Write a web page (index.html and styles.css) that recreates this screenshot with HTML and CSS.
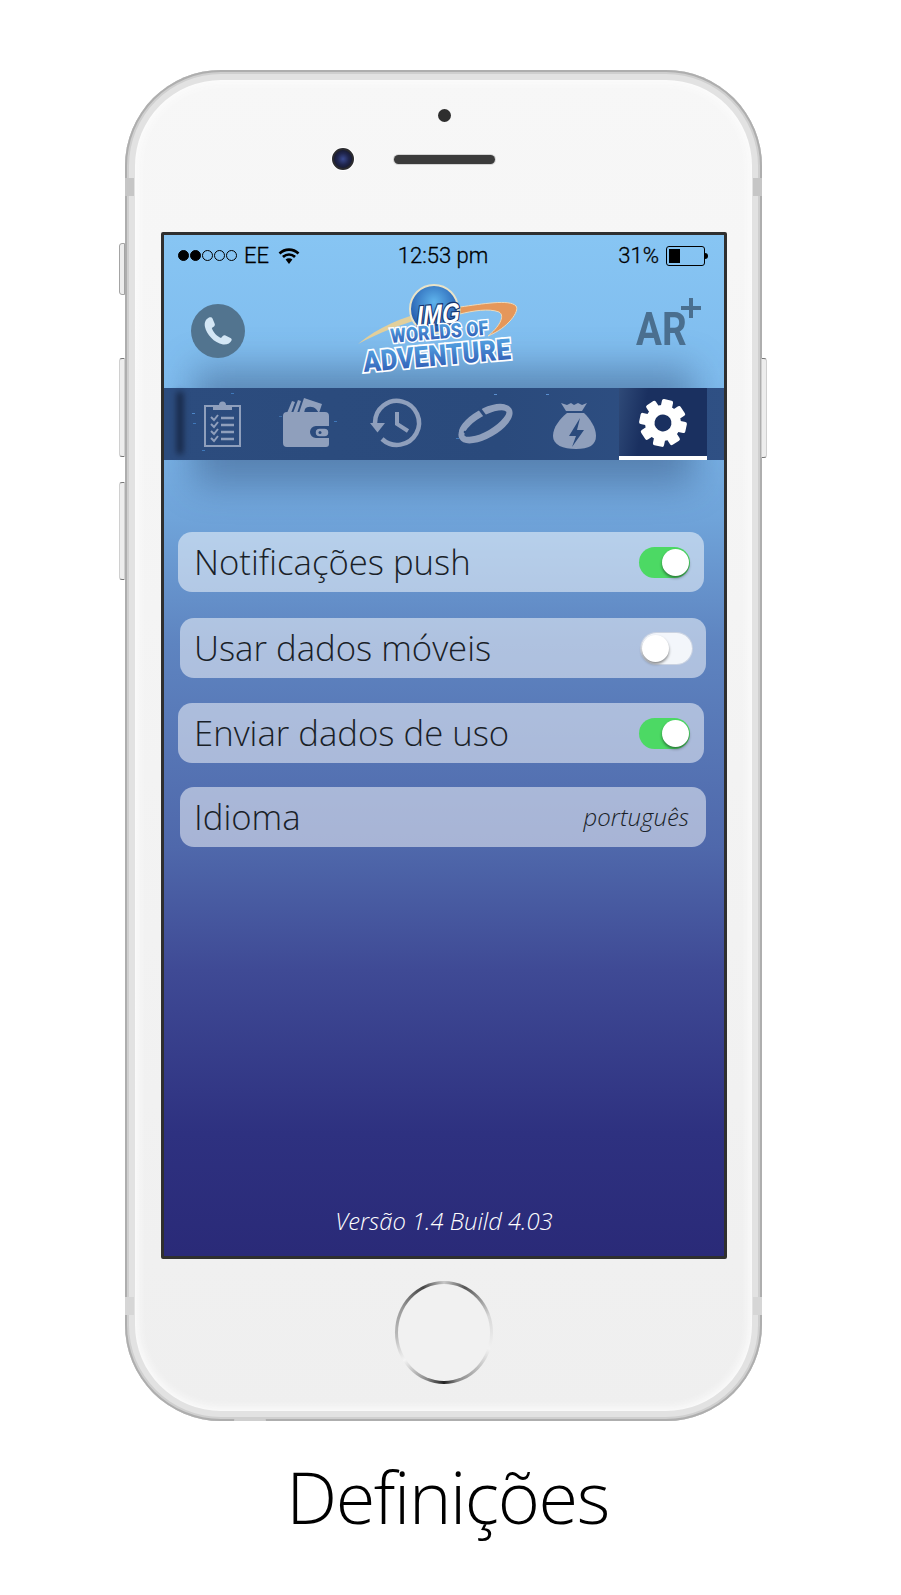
FILE: index.html
```html
<!DOCTYPE html>
<html>
<head>
  <title>Definições</title>
  <link rel="stylesheet" href="styles.css">
</head>
<body>
  <div class="phone">
    <div class="side-btn mute"></div>
    <div class="side-btn vol-up"></div>
    <div class="side-btn vol-down"></div>
    <div class="side-btn power"></div>
    <div class="band band-tl"></div>
    <div class="band band-tr"></div>
    <div class="band band-bl"></div>
    <div class="band band-br"></div>
    <div class="bump"></div>

    <div class="phone-top">
      <div class="sensor"></div>
      <div class="cam-row">
        <div class="camera"></div>
        <div class="earpiece"></div>
      </div>
    </div>

    <div class="screen">
      <div class="status-bar">
        <div class="status-left">
          <span class="dot on"></span><span class="dot on"></span><span class="dot"></span><span class="dot"></span><span class="dot"></span>
          <span class="carrier">EE</span>
          <svg class="wifi" width="22" height="18" viewBox="0 0 22 18">
            <path class="wifi-arc" d="M1.5 6.5a13.5 13.5 0 0 1 19 0"/>
            <path class="wifi-arc" d="M5 10a8.6 8.6 0 0 1 12 0"/>
            <path class="wifi-fill" d="M7.6 12.6a4.8 4.8 0 0 1 6.8 0L11 17z"/>
          </svg>
        </div>
        <div class="status-time">12:53 pm</div>
        <div class="status-right">
          <span class="percent">31%</span>
          <span class="battery"><span class="battery-level"></span></span>
          <span class="battery-nub"></span>
        </div>
      </div>

      <div class="app-header">
        <div class="call-btn">
          <svg width="34" height="34" viewBox="0 0 34 34">
            <path class="call-icon" d="M8 3.500C5 5 3 8 4 13c1.500 7 9 16 18 17.500 4 .5 7.500-1.500 8.500-4 .5-1 0-2-1-2.500l-5-2.500c-1-.5-2-.3-2.700.5L20 24c-4-1.500-8-6-9.200-10l2.200-1.500c.8-.7 1-1.500.8-2.500l-2.300-5.500C11 3.300 9.500 2.800 8 3.500z"/>
          </svg>
        </div>

        <svg class="logo" width="170" height="100" viewBox="0 0 170 100">
          <defs>
            <radialGradient id="globe" cx="50%" cy="35%" r="65%">
              <stop offset="0" stop-color="#5fb4ec"/>
              <stop offset="1" stop-color="#1c4fa6"/>
            </radialGradient>
            <linearGradient id="letters" x1="0" y1="0" x2="0" y2="1">
              <stop offset="0" stop-color="#5bb0ea"/>
              <stop offset="1" stop-color="#2a50ad"/>
            </linearGradient>
          </defs>
          <path class="swoosh-gold" d="M2 63C22 46 48 36 68 31l2 5C46 43 22 52 2 63z"/>
          <circle class="globe" cx="78" cy="28" r="24"/>
          <path class="swoosh-orange" d="M104 26c22-3 50-8 56-1 4 5-8 22-28 30 10-8 18-20 11-24-10-4-27-1-39 2z"/>
          <g transform="translate(60 45) rotate(-5) skewX(-12)">
            <text class="logo-img" textLength="43" lengthAdjust="spacingAndGlyphs">IMG</text>
          </g>
          <text class="logo-worlds" transform="translate(35 62) rotate(-5)" textLength="98" lengthAdjust="spacingAndGlyphs">WORLDS OF</text>
          <text class="logo-adventure" transform="translate(8 91) rotate(-5)" textLength="148" lengthAdjust="spacingAndGlyphs">ADVENTURE</text>
        </svg>

        <div class="ar-btn"><span class="ar-text">AR</span><span class="ar-plus"></span></div>
      </div>

      <div class="nav">
        <span class="nav-specks"></span>
        <div class="tab">
          <svg width="88" height="72" viewBox="0 0 88 72">
            <rect class="ic-line" x="25" y="18" width="35" height="40"/>
            <path class="ic-fill" d="M33 22v-5h6a3.500 3.500 0 0 1 7 0h6v5z"/>
            <path class="ic-check" d="M31 29l3 3 4-5M31 36l3 3 4-5M31 43l3 3 4-5M31 50l3 3 4-5"/>
            <path class="ic-row" d="M41 30h13M41 37h13M41 44h13M41 51h13"/>
          </svg>
        </div>
        <div class="tab">
          <svg width="88" height="72" viewBox="0 0 88 72">
            <path class="ic-fill" d="M19 25l5-12 3 1-4 11zM25 25l5-13 3 1-4 12zM31 25l5-15 18 6-3 9-3-4c-3-3-9-3-11 0l-1 4z"/>
            <path class="ic-fill" d="M19 24h38a4 4 0 0 1 4 4v10H48a6 6 0 0 0 0 12h13v6a3 3 0 0 1-3 3H19a4 4 0 0 1-4-4V28a4 4 0 0 1 4-4z"/>
            <rect class="ic-clasp" x="47" y="40" width="14" height="9" rx="4.500"/>
            <circle class="ic-dot" cx="52" cy="44.500" r="1.500"/>
          </svg>
        </div>
        <div class="tab">
          <svg width="88" height="72" viewBox="0 0 88 72">
            <path class="ic-clock" d="M19 35a22 22 0 1 1 7 16"/>
            <path class="ic-fill" d="M14 35h15l-7.500 9.500z"/>
            <path class="ic-hand" d="M41 24v12l11 7"/>
          </svg>
        </div>
        <div class="tab">
          <svg width="88" height="72" viewBox="0 0 88 72">
            <g transform="rotate(-30 41 35)">
              <ellipse class="ic-ring" cx="41" cy="36" rx="27" ry="11"/>
              <ellipse class="ic-ring-thin" cx="41" cy="33" rx="27" ry="11"/>
            </g>
            <path class="ic-gap" d="M35 20l6 8"/>
            <circle class="ic-dot" cx="21" cy="44" r="1.300"/>
            <circle class="ic-dot" cx="25" cy="41" r="1.300"/>
            <circle class="ic-dot" cx="29" cy="38" r="1.300"/>
          </svg>
        </div>
        <div class="tab">
          <svg width="88" height="72" viewBox="0 0 88 72">
            <path class="ic-fill" d="M29 15l6 2 4-2 3 2 4-2 4 2 5-2-5 8H34z"/>
            <path class="ic-fill" d="M35 25h17c6 6 12 14 12 23 0 9-7 13-20 13s-23-4-23-13c0-9 7-17 14-23z"/>
            <path class="ic-bolt" d="M48 30l-11 18h7l-4 11 12-17h-7z"/>
          </svg>
        </div>
        <div class="tab active">
          <svg width="88" height="72" viewBox="0 0 88 72">
            <g transform="rotate(12 44 37)">
              <circle class="ic-gear" cx="44" cy="37" r="19"/>
              <rect class="ic-gear" x="38" y="12" width="12" height="50" rx="2"/>
              <rect class="ic-gear" x="38" y="12" width="12" height="50" rx="2" transform="rotate(45 44 37)"/>
              <rect class="ic-gear" x="38" y="12" width="12" height="50" rx="2" transform="rotate(90 44 37)"/>
              <rect class="ic-gear" x="38" y="12" width="12" height="50" rx="2" transform="rotate(135 44 37)"/>
              <circle class="ic-hole" cx="44" cy="37" r="9"/>
            </g>
          </svg>
        </div>
      </div>

      <div class="settings">
        <div class="row">
          <span class="row-label">Notificações push</span>
          <span class="toggle on"><span class="knob"></span></span>
        </div>
        <div class="row inset">
          <span class="row-label">Usar dados móveis</span>
          <span class="toggle"><span class="knob"></span></span>
        </div>
        <div class="row">
          <span class="row-label">Enviar dados de uso</span>
          <span class="toggle on"><span class="knob"></span></span>
        </div>
        <div class="row inset">
          <span class="row-label">Idioma</span>
          <span class="row-value">português</span>
        </div>
      </div>

      <div class="version">Versão 1.4 Build 4.03</div>
    </div>

    <div class="home-btn"><div class="home-inner"></div></div>
  </div>

  <h1 class="caption">Definições</h1>
</body>
</html>
```

FILE: styles.css
```css
html, body {
  margin: 0;
  padding: 0;
  background-color: white;
}
body {
  width: 901px;
  height: 1595px;
  overflow: hidden;
  padding-top: 70px;
  box-sizing: border-box;
  font-family: 'Open Sans', sans-serif;
}

/* phone body */
.phone {
  position: relative;
  box-sizing: border-box;
  width: 637px;
  height: 1351px;
  margin-left: 125px;
  padding: 0 35px 0 36px;
  border-radius: 96px;
  background: linear-gradient(#f7f7f7, #f4f4f4 40%, #efefef);
  box-shadow: inset 0 0 0 2px #aeaeae, inset 0 0 0 4px #cfcfcf, inset 0 0 0 10px #e2e2e2, inset 0 0 8px 13px #fcfcfc;
}
.phone-top {
  height: 162px;
  padding-top: 39px;
  box-sizing: border-box;
}
.sensor {
  width: 13px;
  height: 13px;
  margin: 0 auto;
  border-radius: 50%;
  background-color: #2e2e2e;
}
.cam-row {
  display: grid;
  grid-template-columns: 1fr 101px 1fr;
  align-items: center;
  margin-top: 25px;
  height: 24px;
}
.camera {
  grid-column: 1;
  justify-self: end;
  width: 22px;
  height: 22px;
  margin-right: 40px;
  border-radius: 50%;
  box-sizing: border-box;
  border: 2px solid #2b2b2f;
  background: radial-gradient(circle at 50% 50%, #3a4a90 0, #20264e 45%, #101018 100%);
  box-shadow: 0 0 0 1px white;
}
.earpiece {
  grid-column: 2;
  height: 9px;
  border-radius: 5px;
  background-color: #3b3b3b;
  box-shadow: 0 0 0 1px #d4d4d4;
}
.side-btn {
  position: absolute;
  width: 6px;
  border: 1px solid #a4a4a4;
  background-color: #ededed;
  box-sizing: border-box;
}
.mute { left: -6px; top: 173px; height: 52px; border-radius: 3px 0 0 3px; }
.vol-up { left: -6px; top: 288px; height: 99px; border-radius: 3px 0 0 3px; border-color: #d0d0d0; border-top-color: #777; border-bottom-color: #777; }
.vol-down { left: -6px; top: 412px; height: 98px; border-radius: 3px 0 0 3px; border-color: #d0d0d0; border-top-color: #777; border-bottom-color: #777; }
.power { right: -5px; top: 288px; height: 100px; border-radius: 0 3px 3px 0; border-color: #d0d0d0; border-top-color: #777; border-bottom-color: #777; }
.band {
  position: absolute;
  width: 9px;
  height: 18px;
  background-color: #c6c6c6;
}
.band-tl { left: 0; top: 108px; }
.band-tr { right: 0; top: 108px; }
.band-bl { left: 0; top: 1227px; background-color: #d6d6d6; }
.band-br { right: 0; top: 1227px; background-color: #d6d6d6; }
.bump {
  position: absolute;
  left: 109px;
  bottom: 0;
  width: 32px;
  height: 4px;
  border-radius: 8px 8px 0 0;
  background-color: #cfcfcf;
}

/* screen */
.screen {
  display: flex;
  flex-direction: column;
  box-sizing: border-box;
  height: 1027px;
  border: 3px solid #2f2f2f;
  border-radius: 2px;
  overflow: hidden;
  isolation: isolate;
  background: linear-gradient(#87c5f3 0, #7fbcee 14%, #6fa3d9 28%, #5e84c0 40%, #4f68ab 60%, #3f4a95 72%, #2e3180 88%, #2a2a78 100%);
}
.status-bar {
  display: flex;
  align-items: center;
  justify-content: space-between;
  height: 37px;
  padding: 4px 16px 0 14px;
  box-sizing: border-box;
  color: black;
  font-family: 'Roboto', sans-serif;
  font-size: 22px;
  font-weight: 300;
  -webkit-text-stroke: 0.3px black;
}
.status-left, .status-right {
  display: flex;
  align-items: center;
  width: 170px;
}
.status-right { justify-content: flex-end; }
.dot {
  width: 11px;
  height: 11px;
  margin-right: 1px;
  box-sizing: border-box;
  border: 1px solid black;
  border-radius: 50%;
}
.dot.on { background-color: black; }
.carrier { margin: 0 9px 0 6px; }
.wifi-arc {
  fill: none;
  stroke: black;
  stroke-width: 2.6;
}
.wifi-fill { fill: black; }
.percent { margin-right: 7px; }
.battery {
  display: block;
  box-sizing: border-box;
  width: 39px;
  height: 20px;
  padding: 2px;
  border: 1px solid black;
  border-radius: 3px;
}
.battery-level {
  display: block;
  width: 11px;
  height: 100%;
  background-color: black;
}
.battery-nub {
  width: 3px;
  height: 6px;
  background-color: black;
  border-radius: 0 3px 3px 0;
}

/* header with logo */
.app-header {
  display: flex;
  align-items: flex-start;
  height: 116px;
}
.call-btn {
  display: flex;
  align-items: center;
  justify-content: center;
  width: 54px;
  height: 54px;
  margin: 32px 0 0 27px;
  border-radius: 50%;
  background-color: #52748f;
}
.call-icon { fill: #d3e6f5; }
.logo {
  margin: 9px 0 0 111px;
  overflow: visible;
}
.swoosh-gold { fill: #e2cf9b; }
.swoosh-orange { fill: #e5975a; stroke: #eed9b8; stroke-width: 1; }
.globe { fill: url(#globe); stroke: #e9e3c8; stroke-width: 2; }
.logo-img {
  font-family: 'Liberation Sans', sans-serif;
  font-size: 28px;
  font-weight: 700;
  fill: white;
  stroke: #16346e;
  stroke-width: 2.5px;
  paint-order: stroke;
}
.logo-worlds, .logo-adventure {
  font-family: 'Roboto', sans-serif;
  font-weight: 900;
  fill: url(#letters);
  stroke: white;
  paint-order: stroke;
}
.logo-worlds { font-size: 20px; stroke-width: 3px; }
.logo-adventure { font-size: 29px; stroke-width: 3.5px; }
.ar-btn {
  position: relative;
  width: 60px;
  margin: 26px 0 0 110px;
  font-family: 'Roboto', sans-serif;
  font-size: 47px;
  font-weight: 700;
  line-height: 62px;
  color: #4a6f8f;
}
.ar-text {
  display: inline-block;
  transform: scaleX(0.82);
  transform-origin: left center;
}
.ar-plus {
  position: absolute;
  left: 45px;
  top: 8px;
  width: 20px;
  height: 4px;
  background-color: #4a6f8f;
}
.ar-plus::after {
  content: '';
  position: absolute;
  left: 8px;
  top: -8px;
  width: 4px;
  height: 20px;
  background-color: #4a6f8f;
}

/* tabs */
.nav {
  position: relative;
  display: flex;
  flex-shrink: 0;
  height: 72px;
  padding-left: 16px;
  background: linear-gradient(90deg, #2c4c7e, #2a4a7c 60%, #2f5084);
}
.nav::before {
  content: '';
  position: absolute;
  z-index: -1;
  left: 30px;
  right: 30px;
  top: -20px;
  bottom: -24px;
  background-color: rgba(30, 50, 90, 0.36);
  filter: blur(18px);
}
.nav::after {
  content: '';
  position: absolute;
  left: 13px;
  top: 4px;
  width: 6px;
  height: 62px;
  background-color: #15233f;
  filter: blur(3px);
}
.nav-specks {
  position: absolute;
  left: 0;
  top: 0;
  width: 3px;
  height: 1px;
  box-shadow: 28px 25px #4d86c8, 29px 35px #3f78ba, 38px 62px #3f78ba, 67px 5px #3f78ba, 115px 28px #3f6ea8, 170px 33px #3f78ba, 292px 50px #3f78ba, 330px 6px #5a8fd0, 382px 6px #5a8fd0;
}
.tab {
  position: relative;
  z-index: 1;
  width: 88px;
  height: 72px;
}
.tab svg { display: block; }
.tab.active {
  box-sizing: border-box;
  height: 72px;
  margin-left: -1px;
  border-bottom: 4px solid white;
  background: linear-gradient(100deg, #2f4a78, #1a3060 30%);
}
.tab.active svg { height: 68px; }
.ic-fill { fill: #8f9fbc; }
.ic-line { fill: none; stroke: #8f9fbc; stroke-width: 2; }
.ic-check { fill: none; stroke: #8f9fbc; stroke-width: 2; }
.ic-row { fill: none; stroke: #8f9fbc; stroke-width: 2.5; }
.ic-clasp { fill: #8f9fbc; stroke: #2a4a7c; stroke-width: 1.5; }
.ic-dot { fill: #2a4a7c; }
.ic-clock { fill: none; stroke: #8f9fbc; stroke-width: 4.5; }
.ic-hand { fill: none; stroke: #8f9fbc; stroke-width: 4; }
.ic-ring { fill: none; stroke: #8f9fbc; stroke-width: 6; }
.ic-ring-thin { fill: none; stroke: #8f9fbc; stroke-width: 2; }
.ic-gap { fill: none; stroke: #2a4a7c; stroke-width: 3; }
.ic-bolt { fill: #2a4a7c; }
.ic-gear { fill: white; }
.ic-hole { fill: #1a3060; }

/* settings list */
.settings {
  display: flex;
  flex-direction: column;
  flex: 1;
  padding: 72px 20px 0 14px;
}
.row {
  display: flex;
  align-items: center;
  justify-content: space-between;
  box-sizing: border-box;
  height: 60px;
  padding: 0 14px 0 16px;
  border-radius: 14px;
  background-color: rgba(255, 255, 255, 0.5);
  color: #1a1f28;
}
.row:nth-child(2) { margin-top: 26px; }
.row:nth-child(3) { margin-top: 25px; }
.row:nth-child(4) { margin-top: 24px; }
.row.inset {
  margin-left: 2px;
  margin-right: -2px;
  padding-left: 14px;
}
.row-label {
  font-size: 34.7px;
  font-weight: 300;
  margin-top: -2px;
}
.row-value {
  font-size: 24px;
  font-weight: 300;
  font-style: italic;
  margin-right: 3px;
  margin-top: -2px;
}
.toggle {
  position: relative;
  display: block;
  box-sizing: border-box;
  width: 51px;
  height: 31px;
  border-radius: 16px;
  background-color: rgba(255, 255, 255, 0.85);
  box-shadow: 0 0 0 1px rgba(210, 215, 225, 0.8);
}
.toggle.on {
  background-color: #4cd964;
  box-shadow: none;
}
.knob {
  position: absolute;
  left: 1px;
  top: 2px;
  width: 27px;
  height: 27px;
  border-radius: 50%;
  background-color: white;
  box-shadow: 0 2px 3px rgba(0, 0, 0, 0.45);
}
.toggle.on .knob {
  left: auto;
  right: 1px;
}
.version {
  padding-bottom: 19px;
  text-align: center;
  color: white;
  font-size: 23.8px;
  font-weight: 300;
  font-style: italic;
}

/* home button */
.home-btn {
  box-sizing: border-box;
  width: 98px;
  height: 103px;
  margin: 22px auto 0;
  padding: 3px;
  border-radius: 50%;
  background: conic-gradient(#c8c8c8 0deg, #555 25deg, #d8d8d8 70deg, #f2f2f2 110deg, #888 165deg, #222 180deg, #888 200deg, #f4f4f4 235deg, #bbb 265deg, #999 300deg, #444 335deg, #c8c8c8 360deg);
}
.home-inner {
  height: 100%;
  border-radius: 50%;
  background-color: #f1f1f1;
}

.caption {
  margin: 0;
  padding-top: 25px;
  text-align: center;
  width: 895px;
  font-size: 72px;
  font-weight: 300;
  letter-spacing: -1.4px;
  color: black;
  line-height: 100px;
}
```
